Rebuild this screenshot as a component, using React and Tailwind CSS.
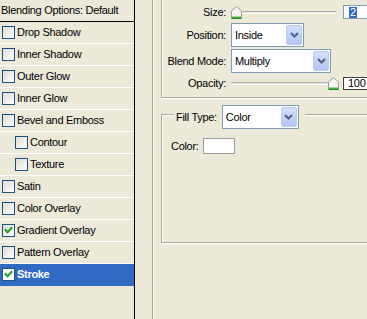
import React from "react";

const font = { fontFamily: '"Liberation Sans", Arial, sans-serif' };

function Check({ checked, selected }) {
  return (
    <span
      className={
        "w-[13px] h-[13px] shrink-0 border flex items-center justify-center " +
        (selected ? "border-[#1C5180] bg-white" : "border-[#1C5180] bg-gradient-to-br from-[#DCDCD7] to-white")
      }
    >
      {checked && (
        <svg width="9" height="9" viewBox="0 0 9 9">
          <polyline points="1.5,4 3.5,6.3 7.5,2" fill="none" stroke="#21A121" strokeWidth="2" strokeLinecap="square" />
        </svg>
      )}
    </span>
  );
}

const rows = [
  { t: "Drop Shadow" },
  { t: "Inner Shadow" },
  { t: "Outer Glow" },
  { t: "Inner Glow" },
  { t: "Bevel and Emboss" },
  { t: "Contour", indent: true },
  { t: "Texture", indent: true },
  { t: "Satin" },
  { t: "Color Overlay" },
  { t: "Gradient Overlay", checked: true },
  { t: "Pattern Overlay" },
  { t: "Stroke", checked: true, selected: true },
];

function Thumb() {
  return (
    <svg width="11" height="13" viewBox="0 0 11 13" className="shrink-0">
      <polygon points="5.5,0.5 10.5,5 10.5,12.5 0.5,12.5 0.5,5" fill="#F3F3EF" stroke="#9C9C98" />
      <polygon points="1,10.5 10,10.5 10,12 1,12" fill="#3FB83F" />
      <line x1="0.5" y1="12.5" x2="10.5" y2="12.5" stroke="#1E8A1E" />
    </svg>
  );
}

function Track({ children }) {
  return <div className="h-[3px] flex-1 rounded-full border-t border-[#B0AFA8] bg-[#E8E7E2] border-b border-b-white">{children}</div>;
}

function Arrow() {
  return (
    <div className="w-[16px] self-stretch my-[1px] mr-[1px] rounded-[2px] border border-[#B9CBF5] bg-gradient-to-b from-[#D2DEFB] to-[#B2C7F6] flex items-center justify-center">
      <svg width="9" height="6" viewBox="0 0 9 6">
        <polyline points="1,1 4.5,4.5 8,1" fill="none" stroke="#4D6185" strokeWidth="2" />
      </svg>
    </div>
  );
}

function Select({ value, w }) {
  return (
    <div className={"h-[24px] border border-[#7F9DB9] bg-white flex items-stretch " + w}>
      <span className="flex-1 pl-[3px] flex items-center text-black">{value}</span>
      <Arrow />
    </div>
  );
}

export default function App() {
  const etched = "border border-[#ACA899] shadow-[inset_1px_1px_0_#fff,1px_1px_0_#fff]";
  return (
    <div
      className="w-[367px] h-[319px] bg-[#ECE9D8] flex overflow-hidden text-[11px] tracking-[-0.3px] text-black leading-none"
      style={font}
    >
      {/* left list */}
      <div className="w-[135px] shrink-0 border-r border-black flex flex-col">
        <div className="h-[22px] border-b border-black pl-[1px] flex items-center">Blending Options: Default</div>
        {rows.map((r) => (
          <div
            key={r.t}
            className={
              "h-[22px] flex items-center gap-[2px] border-b " +
              (r.selected ? "bg-[#316AC5] border-[#316AC5] text-white font-bold " : "border-white ") +
              (r.indent ? "pl-[15px]" : "pl-[2px]")
            }
          >
            <Check checked={r.checked} selected={r.selected} />
            <span>{r.t}</span>
          </div>
        ))}
      </div>

      {/* right side */}
      <div className="ml-[17px] flex-1 min-w-0 border-l border-[#ACA899] shadow-[inset_1px_0_0_#fff] pl-[8px]">
        {/* structure group */}
        <div className={"-mt-[10px] w-[240px] pt-[10px] pb-[4px] " + etched}>
          <div className="h-[22px] flex items-center">
            <span className="w-[64px] text-right">Size:</span>
            <div className="ml-[5px] w-[106px] flex items-center">
              <Thumb />
              <Track />
            </div>
            <div className="ml-[6px] w-[30px] h-[14px] border border-[#7F9DB9] bg-white flex items-center pl-[5px]">
              <span className="bg-[#316AC5] text-white px-[1px]">2</span>
            </div>
          </div>
          <div className="h-[24px] flex items-center">
            <span className="w-[64px] text-right">Position:</span>
            <div className="ml-[5px]">
              <Select value="Inside" w="w-[73px]" />
            </div>
          </div>
          <div className="h-[24px] mt-[2px] flex items-center">
            <span className="w-[64px] text-right">Blend Mode:</span>
            <div className="ml-[5px]">
              <Select value="Multiply" w="w-[100px]" />
            </div>
          </div>
          <div className="h-[20px] flex items-center">
            <span className="w-[64px] text-right">Opacity:</span>
            <div className="ml-[5px] w-[108px] flex items-center">
              <Track />
              <Thumb />
            </div>
            <div className="ml-[4px] w-[30px] h-[13px] border border-[#404040] bg-white flex items-center pl-[4px]">
              100
            </div>
          </div>
        </div>

        {/* fill type group */}
        <div className={"relative mt-[16px] w-[240px] h-[129px] pt-[23px] pl-[9px] " + etched}>
          <div className="absolute -top-[10px] left-[12px] h-[24px] bg-[#ECE9D8] pl-[2px] pr-[6px] flex items-center gap-[5px]">
            <span>Fill Type:</span>
            <Select value="Color" w="w-[77px]" />
          </div>
          <div className="flex items-center h-[16px]">
            <span className="w-[32px]">Color:</span>
            <div className="w-[32px] h-[16px] border border-[#9A9A96] bg-white" />
          </div>
        </div>
      </div>
    </div>
  );
}
